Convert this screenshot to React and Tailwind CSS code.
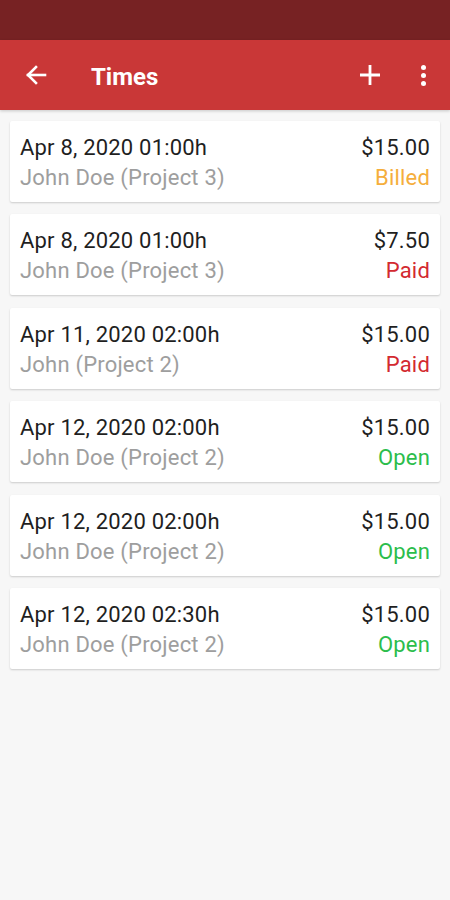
import React from "react";

const entries = [
  { date: "Apr 8, 2020 01:00h", who: "John Doe (Project 3)", amount: "$15.00", status: "Billed" },
  { date: "Apr 8, 2020 01:00h", who: "John Doe (Project 3)", amount: "$7.50", status: "Paid" },
  { date: "Apr 11, 2020 02:00h", who: "John (Project 2)", amount: "$15.00", status: "Paid" },
  { date: "Apr 12, 2020 02:00h", who: "John Doe (Project 2)", amount: "$15.00", status: "Open" },
  { date: "Apr 12, 2020 02:00h", who: "John Doe (Project 2)", amount: "$15.00", status: "Open" },
  { date: "Apr 12, 2020 02:30h", who: "John Doe (Project 2)", amount: "$15.00", status: "Open" },
];

const statusColor = {
  Billed: "text-[#f5ae3c]",
  Paid: "text-[#d32a30]",
  Open: "text-[#2cbd4c]",
};

function TimeCard({ entry }) {
  return (
    <div className="flex h-[81px] items-center justify-between rounded-[2px] bg-white px-[10px] pt-[3px] shadow-[0_1px_2px_rgba(0,0,0,0.18)]">
      <div className="flex flex-col leading-[30px]">
        <span className="text-[#1f1f1f]">{entry.date}</span>
        <span className="text-[#9e9e9e]">{entry.who}</span>
      </div>
      <div className="flex flex-col items-end leading-[30px]">
        <span className="text-[#1f1f1f]">{entry.amount}</span>
        <span className={statusColor[entry.status]}>{entry.status}</span>
      </div>
    </div>
  );
}

export default function App() {
  return (
    <div className="min-h-[900px] bg-[#f7f7f7] font-['Roboto',sans-serif] text-[22px] tracking-[0.2px]">
      <div className="h-[40px] bg-[#772223]" />
      <div className="flex h-[70px] items-center bg-[#c93737] text-white shadow-[0_1px_3px_rgba(0,0,0,0.2)]">
        <div className="flex w-[71px] justify-center">
          <svg width="22" height="22" viewBox="0 0 22 22" fill="none" stroke="white" strokeWidth="2.6" strokeLinecap="square">
            <path d="M20 11H3" />
            <path d="M11 3l-8 8 8 8" />
          </svg>
        </div>
        <span className="ml-[20px] mt-[3px] text-[24px] font-bold leading-none tracking-normal">Times</span>
        <div className="ml-auto flex w-[22px] justify-center">
          <svg width="22" height="22" viewBox="0 0 22 22" fill="none" stroke="white" strokeWidth="2.8">
            <path d="M11 1v20M1 11h20" />
          </svg>
        </div>
        <div className="ml-[40px] mr-[24px] flex flex-col items-center gap-[3px]">
          <span className="h-[5px] w-[5px] rounded-full bg-white" />
          <span className="h-[5px] w-[5px] rounded-full bg-white" />
          <span className="h-[5px] w-[5px] rounded-full bg-white" />
        </div>
      </div>
      <div className="flex flex-col gap-[12.6px] px-[10px] pt-[10.5px]">
        {entries.map((e, i) => (
          <TimeCard key={i} entry={e} />
        ))}
      </div>
    </div>
  );
}
